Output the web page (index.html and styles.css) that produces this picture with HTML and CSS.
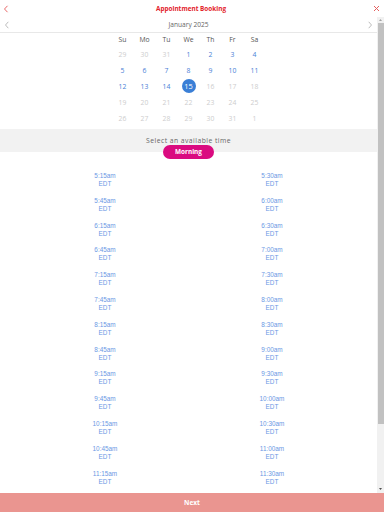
FILE: index.html
```html
<!DOCTYPE html>
<html>
    <head>
        <title>Appointment Booking</title>
        <link rel="stylesheet" href="styles.css">
    </head>
    <body>
        <div class="app">
            <div class="topbar">
                <svg class="back" width="6" height="8" viewBox="0 0 6 8"><polyline points="4.5,0.8 1.5,4 4.5,7.2" fill="none" stroke="#e86868" stroke-width="1"/></svg>
                <p class="title">Appointment Booking</p>
                <svg class="close" width="7" height="7" viewBox="0 0 7 7"><path d="M1 1 L6 6 M6 1 L1 6" stroke="#e46060" stroke-width="1"/></svg>
            </div>

            <div class="body-row">
                <div class="scroll">
                    <div class="month-nav">
                        <svg width="6" height="8" viewBox="0 0 6 8"><polyline points="4.3,0.8 1.5,4 4.3,7.2" fill="none" stroke="#b5b5b5" stroke-width="0.9"/></svg>
                        <p class="month">January 2025</p>
                        <svg width="6" height="8" viewBox="0 0 6 8"><polyline points="1.7,0.8 4.5,4 1.7,7.2" fill="none" stroke="#b5b5b5" stroke-width="0.9"/></svg>
                    </div>

                    <div class="cal">
                        <span class="wd">Su</span><span class="wd">Mo</span><span class="wd">Tu</span><span class="wd">We</span><span class="wd">Th</span><span class="wd">Fr</span><span class="wd">Sa</span>
                        <span class="off">29</span><span class="off">30</span><span class="off">31</span><span class="on">1</span><span class="on">2</span><span class="on">3</span><span class="on">4</span>
                        <span class="on">5</span><span class="on">6</span><span class="on">7</span><span class="on">8</span><span class="on">9</span><span class="on">10</span><span class="on">11</span>
                        <span class="on">12</span><span class="on">13</span><span class="on">14</span><span class="sel"><b>15</b></span><span class="off">16</span><span class="off">17</span><span class="off">18</span>
                        <span class="off">19</span><span class="off">20</span><span class="off">21</span><span class="off">22</span><span class="off">23</span><span class="off">24</span><span class="off">25</span>
                        <span class="off">26</span><span class="off">27</span><span class="off">28</span><span class="off">29</span><span class="off">30</span><span class="off">31</span><span class="off">1</span>
                    </div>

                    <div class="time-head">Select an available time</div>
                    <div class="pill-row"><span class="pill">Morning</span></div>

                    <div class="slots">
                        <div class="slot">5:15am<br>EDT</div><div class="slot">5:30am<br>EDT</div>
                        <div class="slot">5:45am<br>EDT</div><div class="slot">6:00am<br>EDT</div>
                        <div class="slot">6:15am<br>EDT</div><div class="slot">6:30am<br>EDT</div>
                        <div class="slot">6:45am<br>EDT</div><div class="slot">7:00am<br>EDT</div>
                        <div class="slot">7:15am<br>EDT</div><div class="slot">7:30am<br>EDT</div>
                        <div class="slot">7:45am<br>EDT</div><div class="slot">8:00am<br>EDT</div>
                        <div class="slot">8:15am<br>EDT</div><div class="slot">8:30am<br>EDT</div>
                        <div class="slot">8:45am<br>EDT</div><div class="slot">9:00am<br>EDT</div>
                        <div class="slot">9:15am<br>EDT</div><div class="slot">9:30am<br>EDT</div>
                        <div class="slot">9:45am<br>EDT</div><div class="slot">10:00am<br>EDT</div>
                        <div class="slot">10:15am<br>EDT</div><div class="slot">10:30am<br>EDT</div>
                        <div class="slot">10:45am<br>EDT</div><div class="slot">11:00am<br>EDT</div>
                        <div class="slot">11:15am<br>EDT</div><div class="slot">11:30am<br>EDT</div>
                    </div>
                </div>

                <div class="scrollbar">
                    <svg width="7" height="6" viewBox="0 0 7 6"><polygon points="2,4 5,4 3.5,2" fill="#a3a3a3"/></svg>
                    <div class="thumb"></div>
                    <svg width="7" height="6" viewBox="0 0 7 6"><polygon points="2,2 5,2 3.5,4" fill="#505050"/></svg>
                </div>
            </div>

            <button class="next">Next</button>
        </div>
    </body>
</html>
```

FILE: styles.css
```css
body{
    margin: 0;
    font-family: "Open Sans", sans-serif;
    background-color: white;
}
p{
    margin: 0;
}
.app{
    height: 512px;
    display: flex;
    flex-direction: column;
}
.topbar{
    height: 17px;
    flex: none;
    display: flex;
    align-items: center;
    justify-content: space-between;
    padding: 0 4px 0 3px;
}
.title{
    font-size: 6.4px;
    font-weight: bold;
    color: #e3222b;
}
.body-row{
    flex: 1;
    display: flex;
    min-height: 0;
}
.scroll{
    flex: 1;
    overflow: hidden;
}
.scrollbar{
    width: 7px;
    flex: none;
    background-color: #f1f1f1;
    display: flex;
    flex-direction: column;
}
.thumb{
    height: 401px;
    margin: 0 0.5px;
    background-color: #c1c1c1;
}
.scrollbar svg:last-child{
    margin-top: auto;
    margin-bottom: 1px;
}
.month-nav{
    height: 15px;
    border-bottom: 1px solid #e8e8e8;
    display: flex;
    align-items: center;
    justify-content: space-between;
    padding: 0 4px;
}
.month{
    font-size: 6.6px;
    color: #666;
}
.cal{
    width: 154px;
    margin: 0 auto;
    display: grid;
    grid-template-columns: repeat(7, 22px);
    grid-auto-rows: 16px;
    grid-template-rows: 13px;
    font-size: 6.8px;
    text-align: center;
    align-items: center;
    padding-bottom: 3px;
}
.wd{
    color: #555;
}
.on{
    color: #4a80d6;
}
.off{
    color: #cdcdcd;
}
.sel{
    display: flex;
    justify-content: center;
}
.sel b{
    width: 14px;
    height: 14px;
    border-radius: 7px;
    background-color: #3a7fd6;
    color: white;
    font-weight: normal;
    font-size: 7.4px;
    line-height: 14px;
}
.time-head{
    background-color: #f2f2f2;
    height: 23px;
    line-height: 24px;
    text-align: center;
    font-size: 6.8px;
    letter-spacing: 0.45px;
    color: #666;
}
.pill-row{
    display: flex;
    justify-content: center;
    margin-top: -7px;
}
.pill{
    width: 51px;
    height: 14px;
    border-radius: 7px;
    background-color: #da0b80;
    color: white;
    font-size: 6.4px;
    font-weight: bold;
    text-align: center;
    line-height: 14px;
}
.slots{
    display: grid;
    grid-template-columns: 1fr 1fr;
    row-gap: 8.8px;
    padding: 13px 21.5px 0;
}
.slot{
    text-align: center;
    font-family: "Liberation Sans", Arial, sans-serif;
    font-size: 6.4px;
    line-height: 8px;
    color: #6b98e4;
}
.next{
    height: 19px;
    flex: none;
    border: none;
    background-color: #ea9590;
    color: white;
    font-family: "Open Sans", sans-serif;
    font-size: 6.6px;
    font-weight: bold;
}
```
